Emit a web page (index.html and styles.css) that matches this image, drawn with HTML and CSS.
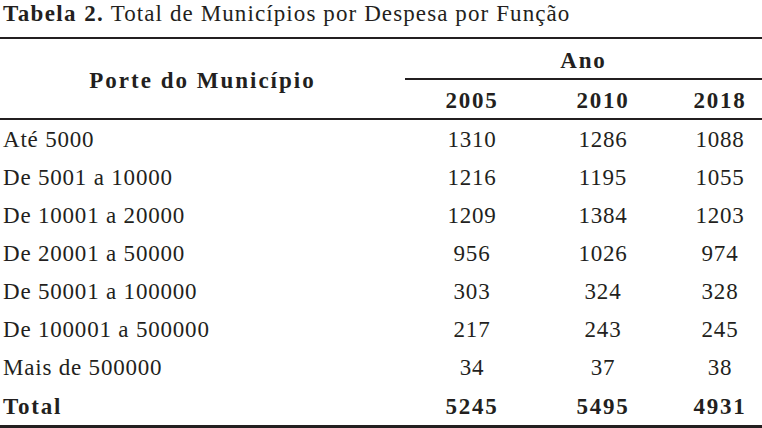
FILE: index.html
```html
<!DOCTYPE html>
<html lang="pt">
<head>
<meta charset="utf-8">
<link rel="stylesheet" href="styles.css">
</head>
<body>
<p class="caption"><b>Tabela 2.</b> Total de Municípios por Despesa por Função</p>
<div class="tbl">
  <div class="porte">Porte do Município</div>
  <div class="ano">Ano</div>
  <div class="yr">2005</div>
  <div class="yr">2010</div>
  <div class="yr">2018</div>

  <div class="lbl">Até 5000</div><div class="num">1310</div><div class="num">1286</div><div class="num">1088</div>
  <div class="lbl">De 5001 a 10000</div><div class="num">1216</div><div class="num">1195</div><div class="num">1055</div>
  <div class="lbl">De 10001 a 20000</div><div class="num">1209</div><div class="num">1384</div><div class="num">1203</div>
  <div class="lbl">De 20001 a 50000</div><div class="num">956</div><div class="num">1026</div><div class="num">974</div>
  <div class="lbl">De 50001 a 100000</div><div class="num">303</div><div class="num">324</div><div class="num">328</div>
  <div class="lbl">De 100001 a 500000</div><div class="num">217</div><div class="num">243</div><div class="num">245</div>
  <div class="lbl">Mais de 500000</div><div class="num">34</div><div class="num">37</div><div class="num">38</div>
  <div class="lbl total">Total</div><div class="num total">5245</div><div class="num total">5495</div><div class="num total">4931</div>
</div>
</body>
</html>
```
FILE: styles.css
```css
html, body {
  margin: 0;
  padding: 0;
  overflow: hidden;
  background: #fff;
}
body {
  width: 762px;
  height: 428px;
  font-family: "Liberation Serif", "Times New Roman", serif;
  font-size: 23px;
  letter-spacing: 0.8px;
  color: #231f20;
}
.caption {
  margin: 0 0 9px 0;
  padding-left: 3px;
  line-height: 28px;
  height: 28px;
  white-space: nowrap;
  letter-spacing: 1.1px;
}
.caption b {
  font-weight: bold;
  letter-spacing: 1.4px;
}
.tbl {
  display: grid;
  grid-template-columns: 405px 134px 128px 106px;
  width: 773px;
  border-top: 2px solid #231f20;
  border-bottom: 3px solid #231f20;
}
.porte {
  grid-row: 1 / span 2;
  grid-column: 1;
  font-weight: bold;
  letter-spacing: 2px;
  display: flex;
  align-items: center;
  justify-content: center;
  padding-top: 5px;
  box-sizing: border-box;
  border-bottom: 2px solid #231f20;
}
.ano {
  grid-column: 2 / span 3;
  font-weight: bold;
  letter-spacing: 1.8px;
  text-align: center;
  height: 41px;
  box-sizing: border-box;
  padding-top: 4px;
  line-height: 35px;
  border-bottom: 2px solid #231f20;
  margin-right: 11px;
}
.yr {
  font-weight: bold;
  letter-spacing: 1.8px;
  text-align: center;
  height: 40px;
  box-sizing: border-box;
  padding-top: 4px;
  line-height: 34px;
  border-bottom: 2px solid #231f20;
}
.lbl, .num {
  height: 38px;
  box-sizing: border-box;
  padding-top: 1px;
  line-height: 37px;
  white-space: nowrap;
}
.lbl {
  padding-left: 3px;
}
.num {
  text-align: center;
}
.total {
  font-weight: bold;
  letter-spacing: 1.8px;
  height: 39px;
  padding-top: 2px;
}
```
